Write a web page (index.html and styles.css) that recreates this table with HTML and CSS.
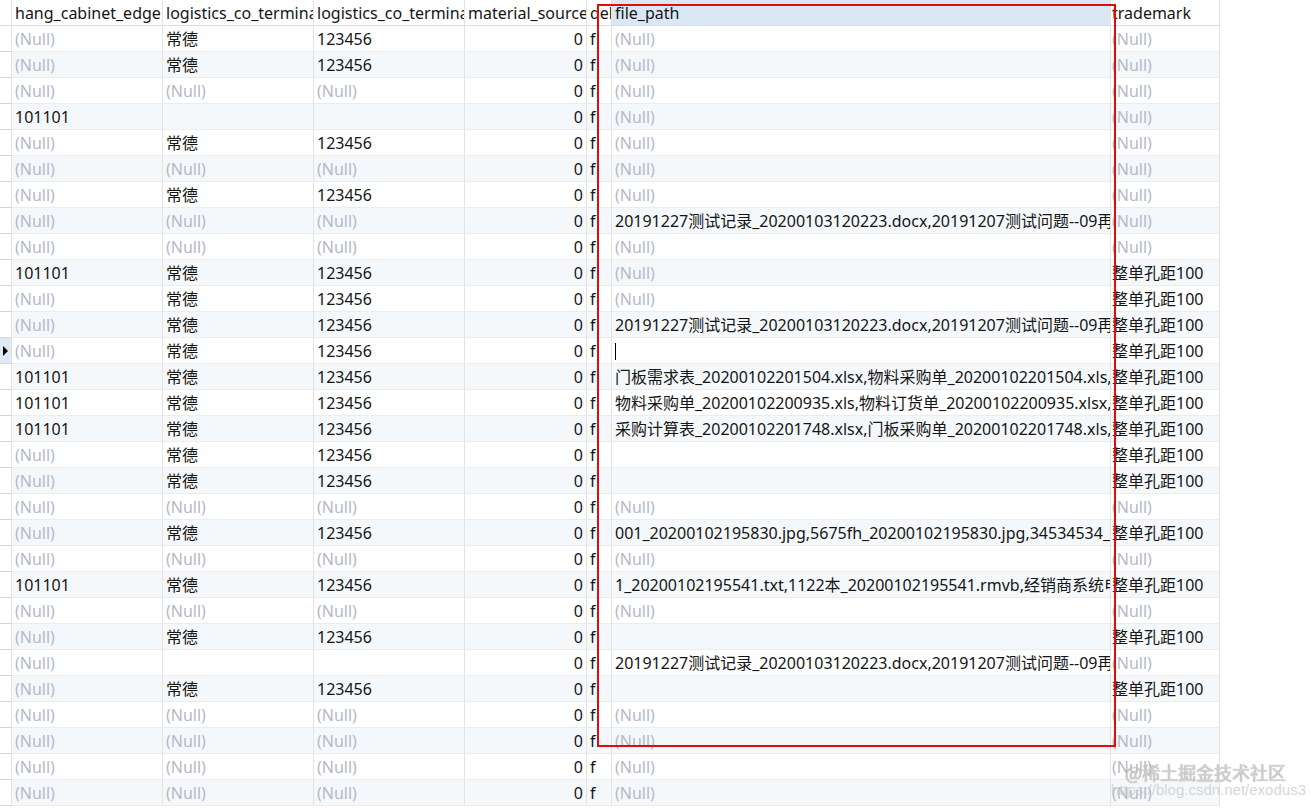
FILE: index.html
```html
<!DOCTYPE html>
<html lang="zh-CN">
<head>
<meta charset="utf-8">
<title>Navicat grid</title>
<link rel="stylesheet" href="styles.css">
</head>
<body>
<div class="grid">
  <div class="row head">
    <div class="c g"></div>
    <div class="c">hang_cabinet_edge</div>
    <div class="c">logistics_co_terminal_name</div>
    <div class="c">logistics_co_terminal_phone</div>
    <div class="c">material_source</div>
    <div class="c">del_flag</div>
    <div class="c fp sel">file_path</div>
    <div class="c tm">trademark</div>
  </div>

  <div class="row"><div class="c g"></div><div class="c n">(Null)</div><div class="c">常德</div><div class="c">123456</div><div class="c num">0</div><div class="c">f</div><div class="c fp n">(Null)</div><div class="c tm n">(Null)</div></div>
  <div class="row alt"><div class="c g"></div><div class="c n">(Null)</div><div class="c">常德</div><div class="c">123456</div><div class="c num">0</div><div class="c">f</div><div class="c fp n">(Null)</div><div class="c tm n">(Null)</div></div>
  <div class="row"><div class="c g"></div><div class="c n">(Null)</div><div class="c n">(Null)</div><div class="c n">(Null)</div><div class="c num">0</div><div class="c">f</div><div class="c fp n">(Null)</div><div class="c tm n">(Null)</div></div>
  <div class="row alt"><div class="c g"></div><div class="c">101101</div><div class="c"></div><div class="c"></div><div class="c num">0</div><div class="c">f</div><div class="c fp n">(Null)</div><div class="c tm n">(Null)</div></div>
  <div class="row"><div class="c g"></div><div class="c n">(Null)</div><div class="c">常德</div><div class="c">123456</div><div class="c num">0</div><div class="c">f</div><div class="c fp n">(Null)</div><div class="c tm n">(Null)</div></div>
  <div class="row alt"><div class="c g"></div><div class="c n">(Null)</div><div class="c n">(Null)</div><div class="c n">(Null)</div><div class="c num">0</div><div class="c">f</div><div class="c fp n">(Null)</div><div class="c tm n">(Null)</div></div>
  <div class="row"><div class="c g"></div><div class="c n">(Null)</div><div class="c">常德</div><div class="c">123456</div><div class="c num">0</div><div class="c">f</div><div class="c fp n">(Null)</div><div class="c tm n">(Null)</div></div>
  <div class="row alt"><div class="c g"></div><div class="c n">(Null)</div><div class="c n">(Null)</div><div class="c n">(Null)</div><div class="c num">0</div><div class="c">f</div><div class="c fp">20191227测试记录_20200103120223.docx,20191207测试问题--09再次测试_20200103120223.docx</div><div class="c tm n">(Null)</div></div>
  <div class="row"><div class="c g"></div><div class="c n">(Null)</div><div class="c n">(Null)</div><div class="c n">(Null)</div><div class="c num">0</div><div class="c">f</div><div class="c fp n">(Null)</div><div class="c tm n">(Null)</div></div>
  <div class="row alt"><div class="c g"></div><div class="c">101101</div><div class="c">常德</div><div class="c">123456</div><div class="c num">0</div><div class="c">f</div><div class="c fp n">(Null)</div><div class="c tm">整单孔距100</div></div>
  <div class="row"><div class="c g"></div><div class="c n">(Null)</div><div class="c">常德</div><div class="c">123456</div><div class="c num">0</div><div class="c">f</div><div class="c fp n">(Null)</div><div class="c tm">整单孔距100</div></div>
  <div class="row alt"><div class="c g"></div><div class="c n">(Null)</div><div class="c">常德</div><div class="c">123456</div><div class="c num">0</div><div class="c">f</div><div class="c fp">20191227测试记录_20200103120223.docx,20191207测试问题--09再次测试_20200103120223.docx</div><div class="c tm">整单孔距100</div></div>
  <div class="row"><div class="c g cur"></div><div class="c n">(Null)</div><div class="c">常德</div><div class="c">123456</div><div class="c num">0</div><div class="c">f</div><div class="c fp edit"><span class="caret"></span></div><div class="c tm">整单孔距100</div></div>
  <div class="row alt"><div class="c g"></div><div class="c">101101</div><div class="c">常德</div><div class="c">123456</div><div class="c num">0</div><div class="c">f</div><div class="c fp">门板需求表_20200102201504.xlsx,物料采购单_20200102201504.xls,　门板订货单_20200102201504.xlsx</div><div class="c tm">整单孔距100</div></div>
  <div class="row"><div class="c g"></div><div class="c">101101</div><div class="c">常德</div><div class="c">123456</div><div class="c num">0</div><div class="c">f</div><div class="c fp">物料采购单_20200102200935.xls,物料订货单_20200102200935.xlsx,　门板采购单.xls</div><div class="c tm">整单孔距100</div></div>
  <div class="row alt"><div class="c g"></div><div class="c">101101</div><div class="c">常德</div><div class="c">123456</div><div class="c num">0</div><div class="c">f</div><div class="c fp">采购计算表_20200102201748.xlsx,门板采购单_20200102201748.xls,门板订货单.xlsx</div><div class="c tm">整单孔距100</div></div>
  <div class="row"><div class="c g"></div><div class="c n">(Null)</div><div class="c">常德</div><div class="c">123456</div><div class="c num">0</div><div class="c">f</div><div class="c fp"></div><div class="c tm">整单孔距100</div></div>
  <div class="row alt"><div class="c g"></div><div class="c n">(Null)</div><div class="c">常德</div><div class="c">123456</div><div class="c num">0</div><div class="c">f</div><div class="c fp"></div><div class="c tm">整单孔距100</div></div>
  <div class="row"><div class="c g"></div><div class="c n">(Null)</div><div class="c n">(Null)</div><div class="c n">(Null)</div><div class="c num">0</div><div class="c">f</div><div class="c fp n">(Null)</div><div class="c tm n">(Null)</div></div>
  <div class="row alt"><div class="c g"></div><div class="c n">(Null)</div><div class="c">常德</div><div class="c">123456</div><div class="c num">0</div><div class="c">f</div><div class="c fp">001_20200102195830.jpg,5675fh_20200102195830.jpg,34534534_20200102195830.jpg</div><div class="c tm">整单孔距100</div></div>
  <div class="row"><div class="c g"></div><div class="c n">(Null)</div><div class="c n">(Null)</div><div class="c n">(Null)</div><div class="c num">0</div><div class="c">f</div><div class="c fp n">(Null)</div><div class="c tm n">(Null)</div></div>
  <div class="row alt"><div class="c g"></div><div class="c">101101</div><div class="c">常德</div><div class="c">123456</div><div class="c num">0</div><div class="c">f</div><div class="c fp">1_20200102195541.txt,1122本_20200102195541.rmvb,经销商系统电子表格.xlsx</div><div class="c tm">整单孔距100</div></div>
  <div class="row"><div class="c g"></div><div class="c n">(Null)</div><div class="c n">(Null)</div><div class="c n">(Null)</div><div class="c num">0</div><div class="c">f</div><div class="c fp n">(Null)</div><div class="c tm n">(Null)</div></div>
  <div class="row alt"><div class="c g"></div><div class="c n">(Null)</div><div class="c">常德</div><div class="c">123456</div><div class="c num">0</div><div class="c">f</div><div class="c fp"></div><div class="c tm">整单孔距100</div></div>
  <div class="row"><div class="c g"></div><div class="c n">(Null)</div><div class="c"></div><div class="c"></div><div class="c num">0</div><div class="c">f</div><div class="c fp">20191227测试记录_20200103120223.docx,20191207测试问题--09再次测试_20200103120223.docx</div><div class="c tm n">(Null)</div></div>
  <div class="row alt"><div class="c g"></div><div class="c n">(Null)</div><div class="c">常德</div><div class="c">123456</div><div class="c num">0</div><div class="c">f</div><div class="c fp"></div><div class="c tm">整单孔距100</div></div>
  <div class="row"><div class="c g"></div><div class="c n">(Null)</div><div class="c n">(Null)</div><div class="c n">(Null)</div><div class="c num">0</div><div class="c">f</div><div class="c fp n">(Null)</div><div class="c tm n">(Null)</div></div>
  <div class="row alt"><div class="c g"></div><div class="c n">(Null)</div><div class="c n">(Null)</div><div class="c n">(Null)</div><div class="c num">0</div><div class="c">f</div><div class="c fp n">(Null)</div><div class="c tm n">(Null)</div></div>
  <div class="row"><div class="c g"></div><div class="c n">(Null)</div><div class="c n">(Null)</div><div class="c n">(Null)</div><div class="c num">0</div><div class="c">f</div><div class="c fp n">(Null)</div><div class="c tm n">(Null)</div></div>
  <div class="row alt"><div class="c g"></div><div class="c n">(Null)</div><div class="c n">(Null)</div><div class="c n">(Null)</div><div class="c num">0</div><div class="c">f</div><div class="c fp n">(Null)</div><div class="c tm n">(Null)</div></div>
</div>

<div class="highlight"></div>
<div class="watermark">
  <div class="wm-main">@稀土掘金技术社区</div>
  <div class="wm-url">https://blog.csdn.net/exodus3</div>
</div>
</body>
</html>
```

FILE: styles.css
```css
* { box-sizing: border-box; }

html, body {
  margin: 0;
  padding: 0;
  background: #ffffff;
}

body {
  position: relative;
  width: 1311px;
  height: 808px;
  overflow: hidden;
  font-family: "Noto Sans", "Noto Sans CJK SC", sans-serif;
  font-size: 16px;
  color: #151515;
}

.grid {
  display: flex;
  flex-direction: column;
  width: 1220px;
}

.row {
  display: grid;
  grid-template-columns: 12px 151px 151px 151px 122px 25px 499px 109px;
  height: 26px;
  background: #ffffff;
}

.row.alt {
  background: #f5f8fb;
}

.c {
  height: 26px;
  line-height: 25px;
  padding: 1px 3px 0;
  border-right: 1px solid #e3e3e3;
  border-bottom: 1px solid #ececec;
  white-space: nowrap;
  overflow: hidden;
}

.head .c {
  border-bottom-color: #dcdcdc;
  background: #ffffff;
}

.head .c.sel {
  background: #dae8f6;
}

.g {
  padding: 0;
  background: #ffffff;
  border-bottom-color: #d6d6d6;
  display: flex;
  align-items: center;
}

.g.cur {
  background: #dfeaf6;
}

.g.cur::before {
  content: "";
  display: block;
  margin-left: 3px;
  width: 0;
  height: 0;
  border-top: 5px solid transparent;
  border-bottom: 5px solid transparent;
  border-left: 5px solid #000000;
}

.n {
  color: #b5b9c6;
}

.num {
  text-align: right;
}

.tm {
  padding-left: 1px;
}

.edit {
  display: flex;
  align-items: center;
  background: #ffffff;
}

.caret {
  display: block;
  width: 1px;
  height: 17px;
  background: #000000;
}

.highlight {
  position: absolute;
  left: 597px;
  top: 4px;
  width: 519px;
  height: 743px;
  border: 2px solid #e10c0c;
  pointer-events: none;
}

.watermark {
  position: absolute;
  left: 1094px;
  top: 762px;
  width: 212px;
  display: flex;
  flex-direction: column;
  align-items: flex-end;
  pointer-events: none;
}

.wm-main {
  font-family: "Noto Sans CJK SC", sans-serif;
  font-size: 18px;
  line-height: 20px;
  color: #d2d2d2;
  text-shadow: 0 0 1px #8c8c8c;
  margin-right: 20px;
}

.wm-url {
  font-family: "Liberation Sans", sans-serif;
  font-size: 15px;
  line-height: 16px;
  color: rgba(200, 200, 200, 0.75);
}
```
